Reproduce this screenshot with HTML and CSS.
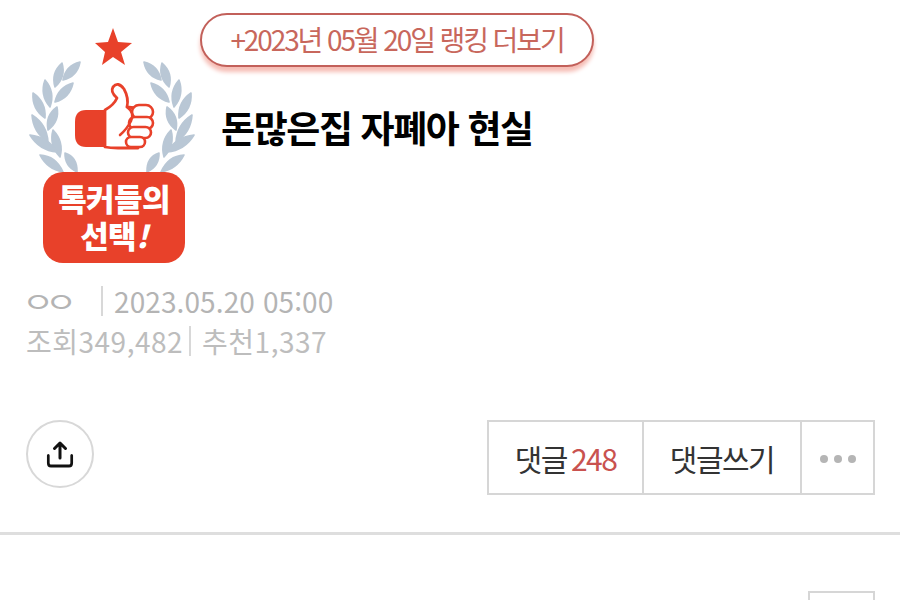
FILE: index.html
```html
<!DOCTYPE html>
<html lang="ko">
<head>
    <meta charset="UTF-8">
    <meta name="viewport" content="width=device-width, initial-scale=1.0">
    <title>돈많은집 자폐아 현실</title>
    <link rel="stylesheet" href="styles.css">
</head>
<body>
    <div class="page">
        <div class="top">
            <svg class="badge" viewBox="28 10 172 256" width="172" height="256">
                <defs>
                    <g id="laurel" fill="#b9c7d5" stroke="#b9c7d5" stroke-width="1.6" stroke-linejoin="round">
                        <path d="M80 62Q77.3 76.5 63 80Q65.7 65.5 80 62Z"/>
                        <path d="M62 63Q66.2 77.2 55 87Q50.8 72.8 62 63Z"/>
                        <path d="M73 83Q69.8 98 55 102Q58.2 87 73 83Z"/>
                        <path d="M45 80Q55.4 92 50 107Q39.6 95 45 80Z"/>
                        <path d="M33 93Q46.2 102 45 118Q31.8 109 33 93Z"/>
                        <path d="M57 107Q59.9 121.4 48 130Q45.1 115.6 57 107Z"/>
                        <path d="M32 115Q46.9 124.4 48 142Q33.1 132.6 32 115Z"/>
                        <path d="M53 130Q64.2 141.5 60 157Q48.8 145.5 53 130Z"/>
                        <path d="M30 135Q47.8 136.7 57 152Q39.2 150.3 30 135Z"/>
                        <path d="M65 153Q77.5 156.9 77 172Q64.5 166.1 65 153Z"/>
                        <path d="M40 155Q55.9 155.8 63 172Q47.1 169.2 40 155Z"/>
                    </g>
                </defs>
                <use href="#laurel"/>
                <use href="#laurel" transform="translate(224 0) scale(-1 1)"/>
                <polygon fill="#e8412a" points="113,28 118,42 132,43 121,52 125,65 113,57 102,65 105,52 95,43 108,42"/>
                <path fill="#e8412a" d="M105 110H86Q75 110 75 122V135Q75 147 86 147H105Z"/>
                <path fill="#fff" stroke="#e8412a" stroke-width="2.8" stroke-linejoin="round" d="M105 110Q114 105 117 98Q110 92 113 87Q118 81 124 89Q129 98 127 107L136 108L138 148H118Q110 148 105 147Z"/>
                <g fill="#fff" stroke="#e8412a" stroke-width="2.6">
                    <rect x="132" y="105" width="21" height="14" rx="7"/>
                    <rect x="129" y="117" width="24" height="12" rx="6"/>
                    <rect x="128" y="127" width="23" height="11" rx="5.5"/>
                    <rect x="126" y="137" width="19" height="10" rx="5"/>
                </g>
                <path fill="none" stroke="#e8412a" stroke-width="2.6" stroke-linecap="round" d="M127 107Q135 113 131 121Q127 129 120 135"/>
                <rect x="43" y="172" width="142" height="91" rx="20" fill="#e8412a"/>
                <text class="badge-text" x="114" y="211">톡커들의</text>
                <text class="badge-text" x="114" y="248">선택<tspan class="badge-bang">!</tspan></text>
            </svg>
            <div class="top-main">
                <a class="rank-pill">+2023년 05월 20일 랭킹 더보기</a>
                <h1 class="title">돈많은집 자폐아 현실</h1>
            </div>
        </div>

        <div class="meta">
            <p class="meta-line meta-author"><span class="nick">ㅇㅇ</span><span class="sep sep-wide"></span><span>2023.05.20 05:00</span></p>
            <p class="meta-line meta-count"><span>조회349,482</span><span class="sep"></span><span>추천1,337</span></p>
        </div>

        <div class="actions">
            <button class="share" aria-label="공유">
                <svg viewBox="0 0 32 32" width="32" height="32" fill="none" stroke="#111" stroke-width="3" stroke-linecap="round" stroke-linejoin="round">
                    <path d="M16 20V5.5M10.5 10.5L16 5L21.5 10.5"/>
                    <path d="M3 17.5V25Q3 28 6 28H26Q29 28 29 25V17.5" transform="translate(1.6 0) scale(.9 1)"/>
                </svg>
            </button>
            <div class="btn-group">
                <a class="btn btn-count">댓글 <em>248</em></a>
                <a class="btn btn-write">댓글쓰기</a>
                <a class="btn btn-more"><i></i><i></i><i></i></a>
            </div>
        </div>

        <hr class="divider">

        <div class="next-row">
            <div class="next-box"></div>
        </div>
    </div>
</body>
</html>
```

FILE: styles.css
```css
html, body {
    margin: 0;
    padding: 0;
    background: #fff;
}

.page {
    height: 600px;
    overflow: hidden;
    font-family: "Noto Sans CJK KR", "Noto Sans", sans-serif;
}

.top {
    display: flex;
    padding: 10px 0 0 28px;
}

.badge {
    flex: none;
    display: block;
}

.badge-text {
    font-size: 31px;
    font-weight: 900;
    fill: #fff;
    text-anchor: middle;
    letter-spacing: -.6px;
}

.badge-bang {
    font-style: italic;
}

.top-main {
    padding-top: 3px;
}

.rank-pill {
    display: block;
    box-sizing: border-box;
    width: 394px;
    height: 54px;
    line-height: 48px;
    text-align: center;
    font-size: 28px;
    letter-spacing: -2.1px;
    color: #c8675c;
    background: #fff;
    border: 2px solid #c2605a;
    border-radius: 27px;
    box-shadow: 0 5px 4px #f6bdb5;
}

.title {
    margin: 35px 0 0 21px;
    font-size: 37px;
    line-height: 50px;
    font-weight: 700;
    letter-spacing: -1.4px;
    color: #000;
}

.meta {
    padding: 15px 0 0 26px;
}

.meta-line {
    display: flex;
    align-items: center;
    margin: 0;
    height: 40px;
    font-size: 28px;
    color: #b4b4b4;
}

.meta-author {
    letter-spacing: .1px;
}

.nick {
    flex: none;
    width: 54px;
    margin-left: -4px;
    white-space: nowrap;
    letter-spacing: -7.4px;
    transform: scaleX(1.25);
    transform-origin: left center;
}

.sep {
    display: block;
    width: 2px;
    height: 30px;
    margin: 0 11px 0 6px;
    background: #d8d8d8;
}

.sep-wide {
    margin-left: 25px;
}

.meta-count {
    letter-spacing: .5px;
    color: #bdbdbd;
}

.actions {
    display: flex;
    justify-content: space-between;
    align-items: flex-start;
    padding: 59px 25px 0 26px;
}

.share {
    display: flex;
    align-items: center;
    justify-content: center;
    box-sizing: border-box;
    width: 68px;
    height: 68px;
    padding: 0;
    background: #fff;
    border: 2px solid #d8d8d8;
    border-radius: 50%;
}

.btn-group {
    display: flex;
    box-sizing: border-box;
    height: 75px;
    border: 2px solid #d6d6d6;
}

.btn {
    display: flex;
    align-items: center;
    justify-content: center;
    box-sizing: border-box;
    font-size: 30px;
    letter-spacing: -1.5px;
    color: #333;
    border-right: 2px solid #d6d6d6;
}

.btn em {
    margin-left: 4px;
    font-style: normal;
    color: #c9524f;
}

.btn-count {
    width: 155px;
}

.btn-write {
    width: 158px;
}

.btn-more {
    width: 71px;
    gap: 6px;
    padding-top: 3px;
    border-right: 0;
}

.btn-more i {
    width: 8px;
    height: 8px;
    border-radius: 50%;
    background: #b5b5b5;
}

.divider {
    height: 3px;
    margin: 37px 0 0;
    border: 0;
    background: #dedede;
}

.next-row {
    display: flex;
    justify-content: flex-end;
    padding: 56px 25px 0 0;
}

.next-box {
    box-sizing: border-box;
    width: 67px;
    height: 60px;
    border: 2px solid #d6d6d6;
}
```
